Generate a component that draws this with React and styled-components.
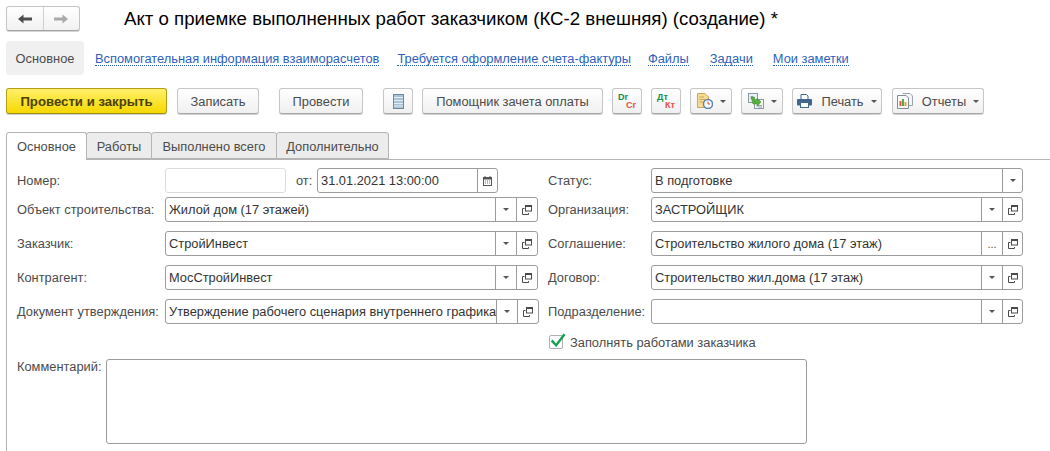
import React from 'react'
import styled, { createGlobalStyle } from 'styled-components'

const GlobalStyle = createGlobalStyle`
    html, body {
        margin: 0;
        padding: 0;
        background: #fff;
    }

    body {
        font-family: "Liberation Sans", Arial, sans-serif;
        font-size: 12.85px;
        color: #4b4b4b;
    }
`

function BackArrow({ color }) {
    return (
        <svg width="14" height="10" viewBox="0 0 14 10">
            <path d="M0 5 L5.5 0.5 V3.5 H14 V6.5 H5.5 V9.5 Z" fill={color} />
        </svg>
    )
}

function ForwardArrow({ color }) {
    return (
        <svg width="14" height="10" viewBox="0 0 14 10">
            <path d="M14 5 L8.5 0.5 V3.5 H0 V6.5 H8.5 V9.5 Z" fill={color} />
        </svg>
    )
}

function ListIcon() {
    return (
        <svg width="11" height="15" viewBox="0 0 11 15">
            <rect x="0.5" y="0.5" width="10" height="14" fill="#a9c3d6" stroke="#6f8797" />
            <path d="M1 3.5H10M1 6.5H10M1 9.5H10M1 12H10" stroke="#e4edf3" strokeWidth="1" />
        </svg>
    )
}

function DocClockIcon() {
    return (
        <svg width="16" height="16" viewBox="0 0 16 16">
            <path d="M0.5 0.5H8L11.5 4V14.5H0.5Z" fill="#f4dc94" stroke="#c9a658" />
            <path d="M2.5 4H7M2.5 6.5H8M2.5 9H6" stroke="#c9a658" />
            <circle cx="11" cy="11" r="4.5" fill="#f6f8fb" stroke="#5a7fa8" strokeWidth="1.4" />
            <path d="M11 8.5V11H13" stroke="#d0504a" fill="none" />
        </svg>
    )
}

function DocArrowIcon() {
    return (
        <svg width="16" height="16" viewBox="0 0 16 16">
            <rect x="0.5" y="0.5" width="9" height="9" fill="#eef1f3" stroke="#8b99a3" />
            <rect x="6.5" y="6.5" width="9" height="9" fill="#f3f5f6" stroke="#8b99a3" />
            <path d="M2.5 3.5H5M2.5 5.5H4M10 12.5H14M10 14H14" stroke="#9aa7b0" />
            <path d="M3 4 H6.5 V7.5 H9 L9 5 L13 9 L9 13.5 V11 H5 Z" fill="#54b03c" stroke="#3a8f2b" strokeWidth="0.5" />
        </svg>
    )
}

function PrinterIcon() {
    return (
        <svg width="15" height="14" viewBox="0 0 15 14">
            <path d="M4 5.5V0.5H9.5L11 2V5.5" fill="#fff" stroke="#3f668c" />
            <rect x="0" y="5" width="15" height="6.5" rx="1" fill="#3f668c" />
            <rect x="3.5" y="8.5" width="8" height="5" fill="#fff" stroke="#3f668c" />
        </svg>
    )
}

function ReportsIcon() {
    return (
        <svg width="16" height="16" viewBox="0 0 16 16">
            <path d="M5.5 0.5H13L15.5 3V12.5H12" fill="#f4f5f6" stroke="#9aa4ab" />
            <path d="M0.5 2.5H9L11.5 5V15.5H0.5Z" fill="#fbfbfb" stroke="#7f8b95" />
            <rect x="2.5" y="8" width="2" height="5" fill="#d9534a" />
            <rect x="5" y="6" width="2" height="7" fill="#57a64a" />
            <rect x="7.5" y="9" width="2" height="4" fill="#d8a63c" />
        </svg>
    )
}

function CalendarIcon() {
    return (
        <svg width="9" height="10" viewBox="0 0 9 10">
            <rect x="0.5" y="1.5" width="8" height="8" fill="#fff" stroke="#555" />
            <rect x="0" y="1" width="9" height="2.5" fill="#555" />
            <path d="M2 0V2M7 0V2" stroke="#555" />
            <path d="M2 5H3M4 5H5M6 5H7M2 7H3M4 7H5M6 7H7" stroke="#777" />
        </svg>
    )
}

function OpenIcon() {
    return (
        <svg width="10" height="10" viewBox="0 0 10 10">
            <rect x="3.5" y="0.5" width="6" height="5.5" fill="none" stroke="#4a4a4a" />
            <path d="M3.5 1.5H9.5" stroke="#4a4a4a" />
            <path d="M2.5 3.5H0.5V9.5H6.5V8" fill="none" stroke="#4a4a4a" />
        </svg>
    )
}

function CheckMark() {
    return (
        <svg width="16" height="15" viewBox="0 0 16 15">
            <path d="M2.5 6.5 L6 10.5 L13.5 0.5 L15.5 2 L6.3 14 L0.8 8.5 Z" fill="#17a04f" />
        </svg>
    )
}

function App() {
    return (
        <>
            <GlobalStyle />
            <Page>
                <TitleBar>
                    <NavGroup>
                        <NavButton><BackArrow color="#4d4d4d" /></NavButton>
                        <NavButton $last><ForwardArrow color="#a9a9a9" /></NavButton>
                    </NavGroup>
                    <Title>Акт о приемке выполненных работ заказчиком (КС-2 внешняя) (создание) *</Title>
                </TitleBar>

                <PanelBar>
                    <PanelActive>Основное</PanelActive>
                    <PanelLink $gap={11}>Вспомогательная информация взаиморасчетов</PanelLink>
                    <PanelLink $gap={18}>Требуется оформление счета-фактуры</PanelLink>
                    <PanelLink $gap={17}>Файлы</PanelLink>
                    <PanelLink $gap={21}>Задачи</PanelLink>
                    <PanelLink $gap={20}>Мои заметки</PanelLink>
                </PanelBar>

                <Toolbar>
                    <MainButton>Провести и закрыть</MainButton>
                    <Button $w={82} $gap={10}>Записать</Button>
                    <Button $w={84} $gap={20}>Провести</Button>
                    <Button $w={30} $gap={20}><ListIcon /></Button>
                    <Button $w={181} $gap={9}>Помощник зачета оплаты</Button>
                    <Button $w={30} $gap={9}>
                        <AccountMark>
                            <Debit>Dr</Debit>
                            <Credit>Cr</Credit>
                        </AccountMark>
                    </Button>
                    <Button $w={30} $gap={9}>
                        <AccountMark>
                            <Debit>Дт</Debit>
                            <Credit>Кт</Credit>
                        </AccountMark>
                    </Button>
                    <Button $w={42} $gap={9}><DocClockIcon /><Caret /></Button>
                    <Button $w={42} $gap={9}><DocArrowIcon /><Caret /></Button>
                    <Button $w={90} $gap={9}><PrinterIcon /><ButtonText>Печать</ButtonText><Caret /></Button>
                    <Button $w={92} $gap={10}><ReportsIcon /><ButtonText>Отчеты</ButtonText><Caret /></Button>
                </Toolbar>

                <TabBar>
                    <Tab $active $w={81}>Основное</Tab>
                    <Tab $w={66}>Работы</Tab>
                    <Tab $w={126}>Выполнено всего</Tab>
                    <Tab $w={113}>Дополнительно</Tab>
                </TabBar>

                <TabBody>
                    <FormGrid>
                        <Cell>
                            <Label>Номер:</Label>
                            <NumberInput />
                            <FromLabel>от:</FromLabel>
                            <DateField>
                                <FieldText>31.01.2021 13:00:00</FieldText>
                                <FieldButton $w={20}><CalendarIcon /></FieldButton>
                            </DateField>
                        </Cell>
                        <Cell>
                            <Label $right>Статус:</Label>
                            <Field>
                                <FieldText>В подготовке</FieldText>
                                <FieldButton $w={20}><SmallCaret /></FieldButton>
                            </Field>
                        </Cell>

                        <Cell>
                            <Label>Объект строительства:</Label>
                            <Field>
                                <FieldText>Жилой дом (17 этажей)</FieldText>
                                <FieldButton $w={21}><SmallCaret /></FieldButton>
                                <FieldButton $w={21}><OpenIcon /></FieldButton>
                            </Field>
                        </Cell>
                        <Cell>
                            <Label $right>Организация:</Label>
                            <Field>
                                <FieldText>ЗАСТРОЙЩИК</FieldText>
                                <FieldButton $w={21}><SmallCaret /></FieldButton>
                                <FieldButton $w={20}><OpenIcon /></FieldButton>
                            </Field>
                        </Cell>

                        <Cell>
                            <Label>Заказчик:</Label>
                            <Field>
                                <FieldText>СтройИнвест</FieldText>
                                <FieldButton $w={21}><SmallCaret /></FieldButton>
                                <FieldButton $w={21}><OpenIcon /></FieldButton>
                            </Field>
                        </Cell>
                        <Cell>
                            <Label $right>Соглашение:</Label>
                            <Field>
                                <FieldText>Строительство жилого дома (17 этаж)</FieldText>
                                <FieldButton $w={21}><Dots>...</Dots></FieldButton>
                                <FieldButton $w={20}><OpenIcon /></FieldButton>
                            </Field>
                        </Cell>

                        <Cell>
                            <Label>Контрагент:</Label>
                            <Field>
                                <FieldText>МосСтройИнвест</FieldText>
                                <FieldButton $w={21}><SmallCaret /></FieldButton>
                                <FieldButton $w={21}><OpenIcon /></FieldButton>
                            </Field>
                        </Cell>
                        <Cell>
                            <Label $right>Договор:</Label>
                            <Field>
                                <FieldText>Строительство жил.дома (17 этаж)</FieldText>
                                <FieldButton $w={21}><SmallCaret /></FieldButton>
                                <FieldButton $w={20}><OpenIcon /></FieldButton>
                            </Field>
                        </Cell>

                        <Cell>
                            <Label>Документ утверждения:</Label>
                            <Field>
                                <FieldText>Утверждение рабочего сценария внутреннего графика</FieldText>
                                <FieldButton $w={21}><SmallCaret /></FieldButton>
                                <FieldButton $w={21}><OpenIcon /></FieldButton>
                            </Field>
                        </Cell>
                        <Cell>
                            <Label $right>Подразделение:</Label>
                            <Field>
                                <FieldText />
                                <FieldButton $w={21}><SmallCaret /></FieldButton>
                                <FieldButton $w={20}><OpenIcon /></FieldButton>
                            </Field>
                        </Cell>
                    </FormGrid>

                    <CheckRow>
                        <CheckBox><CheckMark /></CheckBox>
                        <span>Заполнять работами заказчика</span>
                    </CheckRow>

                    <CommentRow>
                        <CommentLabel>Комментарий:</CommentLabel>
                        <CommentBox />
                    </CommentRow>
                </TabBody>
            </Page>
        </>
    )
}

export default App

const Page = styled.div`
    width: 1050px;
    height: 451px;
    overflow: hidden;
`

const TitleBar = styled.div`
    display: flex;
    align-items: center;
    padding: 6px 0 0 6px;
    height: 25px;
`

const NavGroup = styled.div`
    display: flex;
    width: 74px;
    height: 25px;
    box-sizing: border-box;
    border: 1px solid #c4c4c4;
    border-bottom-color: #a3a3a3;
    border-radius: 3px;
    background: linear-gradient(#fff, #f1f1f1);
    box-shadow: 0 1px 0 #d5d5d5;
`

const NavButton = styled.div`
    flex: 1;
    display: flex;
    align-items: center;
    justify-content: center;
    border-right: ${p => (p.$last ? 'none' : '1px solid #d0d0d0')};
`

const Title = styled.div`
    margin-left: 44px;
    font-size: 18.67px;
    color: #000;
    white-space: nowrap;
`

const PanelBar = styled.div`
    display: flex;
    align-items: center;
    margin: 10px 0 0 6px;
    height: 34px;
`

const PanelActive = styled.div`
    width: 78px;
    height: 34px;
    line-height: 36px;
    text-align: center;
    background: #f0f0f0;
    border-radius: 4px;
    color: #4b4b4b;
`

const PanelLink = styled.span`
    margin: 2px 0 0 ${p => p.$gap}px;
    color: #2c5fbd;
    line-height: 13px;
    border-bottom: 1px dotted #2c5fbd;
    white-space: nowrap;
`

const Toolbar = styled.div`
    display: flex;
    align-items: stretch;
    margin: 13px 0 0 6px;
    height: 26px;
`

const Button = styled.div`
    display: flex;
    align-items: center;
    justify-content: center;
    gap: 7px;
    box-sizing: border-box;
    width: ${p => p.$w}px;
    margin-left: ${p => p.$gap}px;
    border: 1px solid #c6c6c6;
    border-bottom-color: #a8a8a8;
    border-radius: 3px;
    background: linear-gradient(#fff, #f0f0f0);
    box-shadow: 0 1px 0 #d2d2d2;
    color: #4b4b4b;
    white-space: nowrap;
`

const MainButton = styled(Button)`
    width: 161px;
    margin-left: 0;
    border: 1px solid #b49f17;
    border-bottom-color: #9e8b12;
    background: linear-gradient(#fff06a, #f6d800);
    color: #4a4200;
    font-weight: bold;
    font-size: 13.2px;
`

const ButtonText = styled.span`
    margin-left: 2px;
`

const Caret = styled.span`
    width: 0;
    height: 0;
    border-left: 3.5px solid transparent;
    border-right: 3.5px solid transparent;
    border-top: 3.5px solid #555;
`

const AccountMark = styled.div`
    display: flex;
    flex-direction: column;
    width: 18px;
    font-size: 9px;
    font-weight: bold;
    line-height: 8px;
`

const Debit = styled.span`
    color: #12924a;
`

const Credit = styled.span`
    color: #e2504a;
    text-align: right;
`

const TabBar = styled.div`
    display: flex;
    margin: 18px 0 0 6px;
    height: 28px;
`

const Tab = styled.div`
    box-sizing: border-box;
    width: ${p => p.$w}px;
    height: ${p => (p.$active ? '28px' : '27px')};
    margin-left: ${p => (p.$active ? '0' : '-1px')};
    padding-top: 6px;
    text-align: center;
    border: 1px solid #b4b4b4;
    border-bottom: ${p => (p.$active ? 'none' : '1px solid #b4b4b4')};
    border-radius: 3px 3px 0 0;
    background: ${p => (p.$active ? '#fff' : '#ececec')};
    color: #4b4b4b;
    position: relative;
    z-index: ${p => (p.$active ? 1 : 0)};
`

const TabBody = styled.div`
    margin: -1px 0 0 6px;
    height: 320px;
    box-sizing: border-box;
    border-top: 1px solid #b4b4b4;
    border-left: 1px solid #b4b4b4;
    padding: 8px 0 0 10px;
`

const FormGrid = styled.div`
    display: grid;
    grid-template-columns: 521px 475px;
    column-gap: 10px;
    grid-template-rows: 29px 34px 34px 34px 25px;
`

const Cell = styled.div`
    display: flex;
    align-items: flex-start;
`

const Label = styled.div`
    flex: none;
    width: ${p => (p.$right ? '103px' : '148px')};
    height: 25px;
    line-height: 26px;
    white-space: nowrap;
`

const NumberInput = styled.div`
    flex: none;
    box-sizing: border-box;
    width: 121px;
    height: 25px;
    border: 1px solid #dcdcdc;
    border-radius: 3px;
`

const FromLabel = styled.div`
    flex: none;
    box-sizing: border-box;
    width: 31px;
    height: 25px;
    line-height: 26px;
    padding-left: 10px;
`

const Field = styled.div`
    display: flex;
    flex: 1;
    box-sizing: border-box;
    height: 25px;
    border: 1px solid #9c9c9c;
    border-radius: 3px;
    background: #fff;
`

const DateField = styled(Field)`
    flex: none;
    width: 181px;
`

const FieldText = styled.div`
    flex: 1;
    min-width: 0;
    padding-left: 3px;
    line-height: 24px;
    color: #333;
    white-space: nowrap;
    overflow: hidden;
`

const FieldButton = styled.div`
    flex: none;
    box-sizing: border-box;
    display: flex;
    align-items: center;
    justify-content: center;
    width: ${p => p.$w}px;
    border-left: 1px solid #9c9c9c;
`

const SmallCaret = styled.span`
    width: 0;
    height: 0;
    border-left: 3px solid transparent;
    border-right: 3px solid transparent;
    border-top: 3px solid #555;
`

const Dots = styled.span`
    font-size: 11px;
    line-height: 14px;
    color: #555;
`

const CheckRow = styled.div`
    display: flex;
    align-items: center;
    height: 16px;
    margin: 10px 0 0 532px;
`

const CheckBox = styled.div`
    position: relative;
    flex: none;
    box-sizing: border-box;
    width: 14px;
    height: 14px;
    margin-right: 7px;
    border: 1px solid #b0b0b0;
    border-radius: 2px;

    svg {
        position: absolute;
        left: 0;
        top: -3px;
    }
`

const CommentRow = styled.div`
    display: flex;
    margin-top: 9px;
`

const CommentLabel = styled.div`
    flex: none;
    width: 89px;
`

const CommentBox = styled.div`
    box-sizing: border-box;
    width: 701px;
    height: 85px;
    border: 1px solid #9c9c9c;
    border-radius: 3px;
`
